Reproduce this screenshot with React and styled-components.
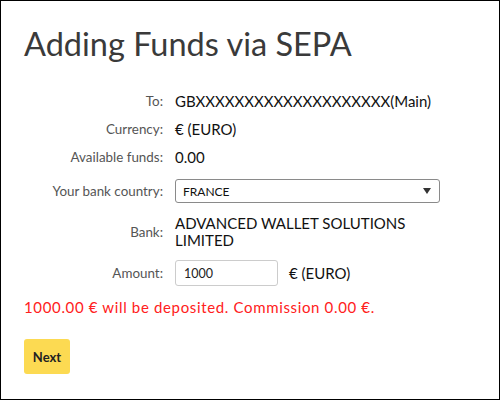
import styled, { createGlobalStyle } from "styled-components"

const GlobalStyle = createGlobalStyle`
html, body {
  margin: 0;
  padding: 0;
  background: #fff;
}
`

const Page = styled.div`
box-sizing: border-box;
width: 500px;
height: 400px;
border: 1px solid #000;
padding: 23px 23px 0 23px;
font-family: 'Lato', 'Open Sans', sans-serif;
color: #111;
`

const Title = styled.h1`
margin: 0;
font-family: 'Lato', sans-serif;
font-weight: 400;
font-size: 32.5px;
line-height: 40px;
color: #3a3a3a;
`

const Row = styled.div`
display: flex;
align-items: center;
gap: 12px;
margin-top: ${p => p.space}px;
min-height: 20px;
`

const Label = styled.div`
width: 139px;
flex-shrink: 0;
text-align: right;
font-size: 13.4px;
color: #555;
`

const Value = styled.div`
font-size: 15px;
line-height: 17px;
color: #111;
`

const SelectBox = styled.div`
box-sizing: border-box;
width: 265px;
height: 24px;
border: 1px solid #8a8a8a;
border-radius: 3px;
display: flex;
align-items: center;
justify-content: space-between;
padding: 0 8px 0 7px;
font-size: 12px;
color: #111;
`

const Arrow = styled.span`
width: 0;
height: 0;
border-left: 4px solid transparent;
border-right: 4px solid transparent;
border-top: 6px solid #333;
`

const Input = styled.div`
box-sizing: border-box;
width: 103px;
height: 26px;
border: 1px solid #ccc;
border-radius: 3px;
display: flex;
align-items: center;
padding: 0 8px;
font-size: 12.5px;
color: #222;
`

const Unit = styled(Value)`
margin-left: -1px;
`

const Notice = styled.div`
margin-top: 11px;
font-size: 15px;
line-height: 20px;
letter-spacing: 0.65px;
color: #ff2020;
`

const Button = styled.button`
display: block;
margin-top: 22px;
width: 46px;
height: 35px;
border: none;
border-radius: 3px;
background: #fcda52;
font-family: 'Lato', sans-serif;
font-weight: 700;
font-size: 13px;
color: #222;
padding: 0;
`

const App = () => {
    return (
        <>
            <GlobalStyle />
            <Page>
                <Title>Adding Funds via SEPA</Title>
                <Row space={27}>
                    <Label>To:</Label>
                    <Value>GBXXXXXXXXXXXXXXXXXXXX(Main)</Value>
                </Row>
                <Row space={8}>
                    <Label>Currency:</Label>
                    <Value>€ (EURO)</Value>
                </Row>
                <Row space={8}>
                    <Label>Available funds:</Label>
                    <Value>0.00</Value>
                </Row>
                <Row space={12}>
                    <Label>Your bank country:</Label>
                    <SelectBox>
                        FRANCE
                        <Arrow />
                    </SelectBox>
                </Row>
                <Row space={12}>
                    <Label>Bank:</Label>
                    <Value>ADVANCED WALLET SOLUTIONS<br />LIMITED</Value>
                </Row>
                <Row space={11}>
                    <Label>Amount:</Label>
                    <Input>1000</Input>
                    <Unit>€ (EURO)</Unit>
                </Row>
                <Notice>1000.00 € will be deposited. Commission 0.00 €.</Notice>
                <Button>Next</Button>
            </Page>
        </>
    )
}

export default App
